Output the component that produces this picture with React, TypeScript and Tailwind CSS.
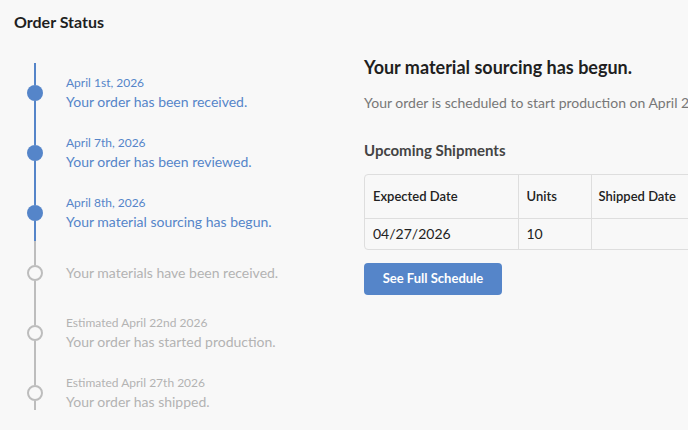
import React from 'react'

type Step = {
  date?: string
  label: string
  done: boolean
}

const STEPS: Step[] = [
  { date: 'April 1st, 2026', label: 'Your order has been received.', done: true },
  { date: 'April 7th, 2026', label: 'Your order has been reviewed.', done: true },
  { date: 'April 8th, 2026', label: 'Your material sourcing has begun.', done: true },
  { label: 'Your materials have been received.', done: false },
  { date: 'Estimated April 22nd 2026', label: 'Your order has started production.', done: false },
  { date: 'Estimated April 27th 2026', label: 'Your order has shipped.', done: false },
]

const SHIPMENTS = [{ expected: '04/27/2026', units: '10', shipped: '' }]

function Timeline() {
  return (
    <div className="flex flex-col pl-[27px]">
      {STEPS.map((step, i) => {
        const last = i === STEPS.length - 1
        const next = STEPS[i + 1]
        // line under the last finished dot fades to grey part way down
        const bottomLine = step.done
          ? next && !next.done
            ? 'bg-[linear-gradient(to_bottom,#5585c9_20px,#bdbdbd_20px)]'
            : 'bg-[#5585c9]'
          : 'bg-[#bdbdbd]'
        return (
          <div key={i} className={`flex ${last ? 'h-[47px]' : 'h-[60px]'}`}>
            <div className="flex w-4 flex-col items-center">
              <div className={`h-[22px] w-[2px] ${step.done ? 'bg-[#5585c9]' : 'bg-[#bdbdbd]'}`} />
              {step.done ? (
                <div className="h-4 w-4 rounded-full bg-[#5585c9]" />
              ) : (
                <div className="h-4 w-4 rounded-full border-2 border-[#bdbdbd]" />
              )}
              <div className={`w-[2px] flex-1 ${bottomLine}`} />
            </div>
            <div className="ml-[23px] flex h-[60px] flex-col justify-center pb-[1px]">
              {step.date && (
                <div
                  className={`text-[12px] leading-[18px] ${step.done ? 'text-[#5585c9]' : 'text-[#b3b3b3]'}`}
                >
                  {step.date}
                </div>
              )}
              <div
                className={`text-[14px] leading-[20px] ${step.done ? 'text-[#5585c9]' : 'text-[#b3b3b3]'}`}
              >
                {step.label}
              </div>
            </div>
          </div>
        )
      })}
    </div>
  )
}

export default function App() {
  return (
    <div
      className="h-[430px] w-[688px] overflow-hidden bg-[#f8f8f8] text-[#222]"
      style={{ fontFamily: 'Lato, "Open Sans", sans-serif' }}
    >
      <h1 className="px-[14px] pt-[12px] text-[16px] font-bold leading-[20px] text-[#1f1f1f]">
        Order Status
      </h1>

      <div className="mt-[31px] flex">
        <div className="w-[364px] shrink-0">
          <Timeline />
        </div>

        <div className="w-[420px] shrink-0">
          <h2 className="-mt-[8px] text-[18px] font-bold leading-[24px] text-[#1f1f1f]">
            Your material sourcing has begun.
          </h2>
          <p className="mt-[14px] whitespace-nowrap text-[14px] leading-[20px] text-[#777]">
            Your order is scheduled to start production on April 22nd 2026.
          </p>

          <h3 className="mt-[27px] text-[15px] font-bold leading-[20px] text-[#444]">
            Upcoming Shipments
          </h3>

          <div className="mt-[14px] w-[400px] overflow-hidden rounded-[4px] border border-[#dedede]">
            <table className="w-full border-collapse text-left text-[13px]">
              <thead>
                <tr className="h-[43px] border-b border-[#dedede]">
                  <th className="w-[153px] border-r border-[#dedede] px-[8px] font-semibold text-[#222]">
                    Expected Date
                  </th>
                  <th className="w-[73px] border-r border-[#dedede] px-[8px] font-semibold text-[#222]">
                    Units
                  </th>
                  <th className="px-[7px] font-semibold text-[#222]">Shipped Date</th>
                </tr>
              </thead>
              <tbody>
                {SHIPMENTS.map((s) => (
                  <tr key={s.expected} className="h-[31px]">
                    <td className="border-r border-[#dedede] px-[8px] text-[14px] text-[#222]">
                      {s.expected}
                    </td>
                    <td className="border-r border-[#dedede] px-[8px] text-[14px] text-[#222]">
                      {s.units}
                    </td>
                    <td className="px-[7px]">{s.shipped}</td>
                  </tr>
                ))}
              </tbody>
            </table>
          </div>

          <button className="mt-[13px] h-[32px] w-[138px] rounded-[4px] bg-[#5585c9] text-[13px] font-bold text-white">
            See Full Schedule
          </button>
        </div>
      </div>
    </div>
  )
}
